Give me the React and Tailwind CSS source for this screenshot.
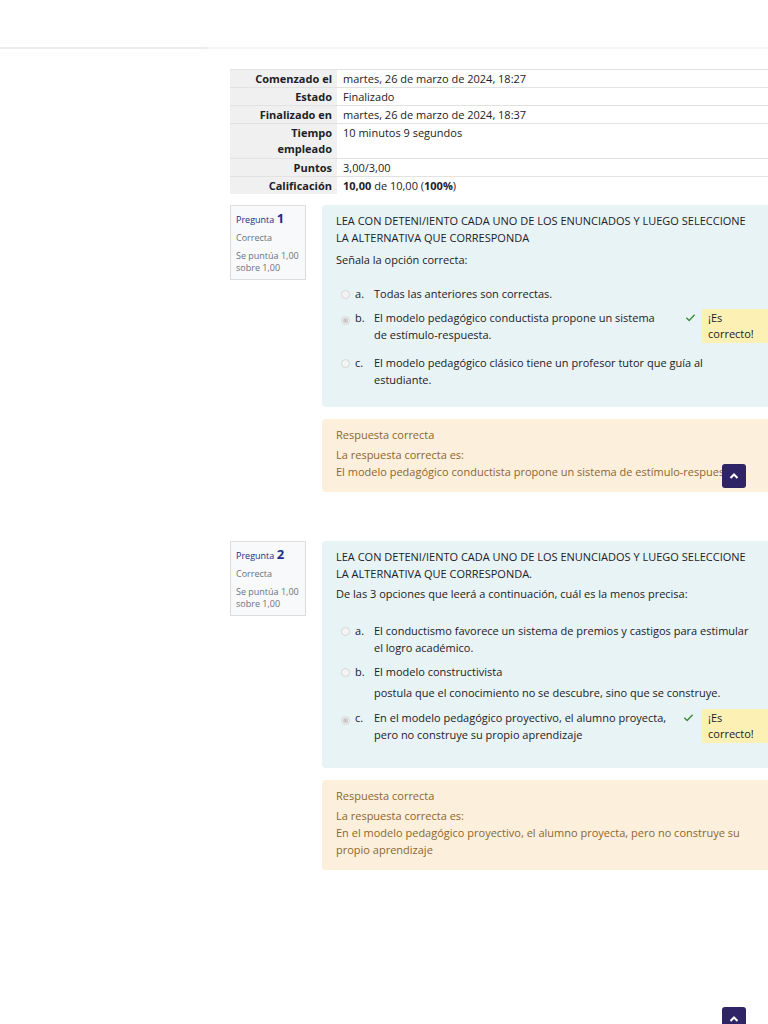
import React from "react";

const font = { fontFamily: '"Open Sans", "DejaVu Sans", sans-serif' };

function Radio({ checked }) {
  return (
    <span className="mt-[4px] inline-flex h-[9px] w-[9px] shrink-0 items-center justify-center rounded-full border border-[#d5d5d5] bg-[#f4f4f4]">
      {checked && <span className="h-[5px] w-[5px] rounded-full bg-[#c8c8c8]" />}
    </span>
  );
}

function Check() {
  return (
    <svg width="11" height="11" viewBox="0 0 16 16" className="mt-[3px] shrink-0">
      <path d="M2 8.5 L6 12.5 L14 4" fill="none" stroke="#3a8a3a" strokeWidth="2" />
    </svg>
  );
}

function Option({ letter, checked, children, correct, extra, gap = "ml-[6px]", pre = "ml-0" }) {
  return (
    <div className="flex items-start">
      <div className="w-[16px] shrink-0 pt-[1px] pl-[2px]"><Radio checked={checked} /></div>
      <span className="w-[19px] shrink-0">{letter}.</span>
      <div className="flex-1">
        {children}
        {extra}
      </div>
      {correct && (
        <div className={`flex items-start ${pre}`}>
          <Check />
          <div className={`${gap} w-[66px] bg-[#fcf0b4] px-[6px] py-[1px] leading-[16px]`}>¡Es<br />correcto!</div>
        </div>
      )}
    </div>
  );
}

function InfoBox({ n }) {
  return (
    <div className="w-[76px] shrink-0 self-start border border-[#dcdcdc] bg-[#f8f9fa] px-[5px] pt-[6px] pb-[5px] text-[9px] leading-[12px] text-[#6a737b]">
      <div className="text-[#1d2b8c]">
        Pregunta <span className="text-[13px] font-bold">{n}</span>
      </div>
      <div className="mt-[6px]">Correcta</div>
      <div className="mt-[6px]">Se puntúa 1,00 sobre 1,00</div>
    </div>
  );
}

function TopBtn({ top }) {
  return (
    <div className={`absolute left-[722px] flex h-[24px] w-[24px] items-center justify-center rounded-[3px] bg-[#2e2466] ${top}`}>
      <svg width="10" height="8" viewBox="0 0 10 8">
        <path d="M1.5 6 L5 2.5 L8.5 6" fill="none" stroke="white" strokeWidth="2" />
      </svg>
    </div>
  );
}

export default function App() {
  const rows = [
    ["Comenzado el", "martes, 26 de marzo de 2024, 18:27"],
    ["Estado", "Finalizado"],
    ["Finalizado en", "martes, 26 de marzo de 2024, 18:37"],
    ["Tiempo empleado", "10 minutos 9 segundos"],
    ["Puntos", "3,00/3,00"],
    [
      "Calificación",
      <span><b>10,00</b> de 10,00 (<b>100%</b>)</span>,
    ],
  ];
  return (
    <div className="relative h-[1024px] w-[768px] overflow-hidden bg-white text-[11px] text-[#1d2125]" style={font}>
      <div className="h-[47px]" />
      <div className="flex h-[2px]">
        <div className="w-[207px] bg-[#ececec]" />
        <div className="flex-1 bg-[#f6f6f6]" />
      </div>

      <div className="pl-[230px] pt-[20px]">
        <table className="w-[538px] border-collapse">
          <tbody>
            {rows.map(([k, v], i) => {
              const two = k === "Tiempo empleado";
              return (
                <tr key={i} className="border-t border-[#e2e2e2]">
                  <th className={`w-[107px] bg-[#f0f0f0] px-[5px] py-[1px] text-right align-top font-bold ${two ? "leading-[16px]" : "leading-[15px]"}`}>
                    {two ? (<>Tiempo<br />empleado</>) : k}
                  </th>
                  <td className={`px-[6px] py-[1px] align-top ${two ? "leading-[16px]" : "leading-[15px]"}`}>{v}</td>
                </tr>
              );
            })}
          </tbody>
        </table>

        <div className="mt-[11px] flex gap-[16px]">
          <InfoBox n="1" />
          <div className="flex flex-1 flex-col gap-[12px]">
            <div className="rounded-l-[4px] bg-[#e7f3f5] pl-[14px] pr-0 pt-[7px] pb-[19px] leading-[17px]">
              <div className="pr-[8px]">LEA CON DETENI/IENTO CADA UNO DE LOS ENUNCIADOS Y LUEGO SELECCIONE LA ALTERNATIVA QUE CORRESPONDA</div>
              <div className="mt-[5px]">Señala la opción correcta:</div>
              <div className="mt-[17px] flex flex-col gap-[6px] pl-[3px]">
                <div className="pr-[8px]"><Option letter="a">Todas las anteriores son correctas.</Option></div>
                <div className="pr-0"><Option letter="b" checked correct pre="ml-[22px]">El modelo pedagógico conductista propone un sistema de estímulo-respuesta.</Option></div>
                <div className="mt-[5px] pr-[8px]">
                  <Option letter="c">El modelo pedagógico clásico tiene un profesor tutor que guía al estudiante.</Option>
                </div>
              </div>
            </div>
            <div className="rounded-l-[4px] bg-[#fcefdc] px-[14px] pt-[7px] pb-[12px] leading-[17px] text-[#8e662e]">
              <div>Respuesta correcta</div>
              <div className="mt-[3px]">La respuesta correcta es:</div>
              <div className="whitespace-nowrap">El modelo pedagógico conductista propone un sistema de estímulo-respuesta.</div>
            </div>
          </div>
        </div>

        <div className="mt-[49px] flex gap-[16px]">
          <InfoBox n="2" />
          <div className="flex flex-1 flex-col gap-[12px]">
            <div className="rounded-l-[4px] bg-[#e7f3f5] pl-[14px] pr-0 pt-[7px] pb-[25px] leading-[17px]">
              <div className="pr-[8px]">LEA CON DETENI/IENTO CADA UNO DE LOS ENUNCIADOS Y LUEGO SELECCIONE LA ALTERNATIVA QUE CORRESPONDA.</div>
              <div className="mt-[3px]">De las 3 opciones que leerá a continuación, cuál es la menos precisa:</div>
              <div className="mt-[20px] flex flex-col gap-[7px] pl-[3px]">
                <div className="pr-[8px]"><Option letter="a">El conductismo favorece un sistema de premios y castigos para estimular el logro académico.</Option></div>
                <div className="pr-[8px]"><Option letter="b" extra={<div className="mt-[4px]">postula que el conocimiento no se descubre, sino que se construye.</div>}>El modelo constructivista</Option></div>
                <div className="mt-[1px] pr-0"><Option letter="c" checked correct pre="ml-[3px]" gap="ml-[8px]">En el modelo pedagógico proyectivo, el alumno proyecta, pero no construye su propio aprendizaje</Option></div>
              </div>
            </div>
            <div className="rounded-l-[4px] bg-[#fcefdc] px-[14px] pt-[7px] pb-[12px] leading-[17px] text-[#8e662e]">
              <div>Respuesta correcta</div>
              <div className="mt-[3px]">La respuesta correcta es:</div>
              <div>En el modelo pedagógico proyectivo, el alumno proyecta, pero no construye su propio aprendizaje</div>
            </div>
          </div>
        </div>
      </div>

      <TopBtn top="top-[464px]" />
      <TopBtn top="top-[1007px]" />
    </div>
  );
}
